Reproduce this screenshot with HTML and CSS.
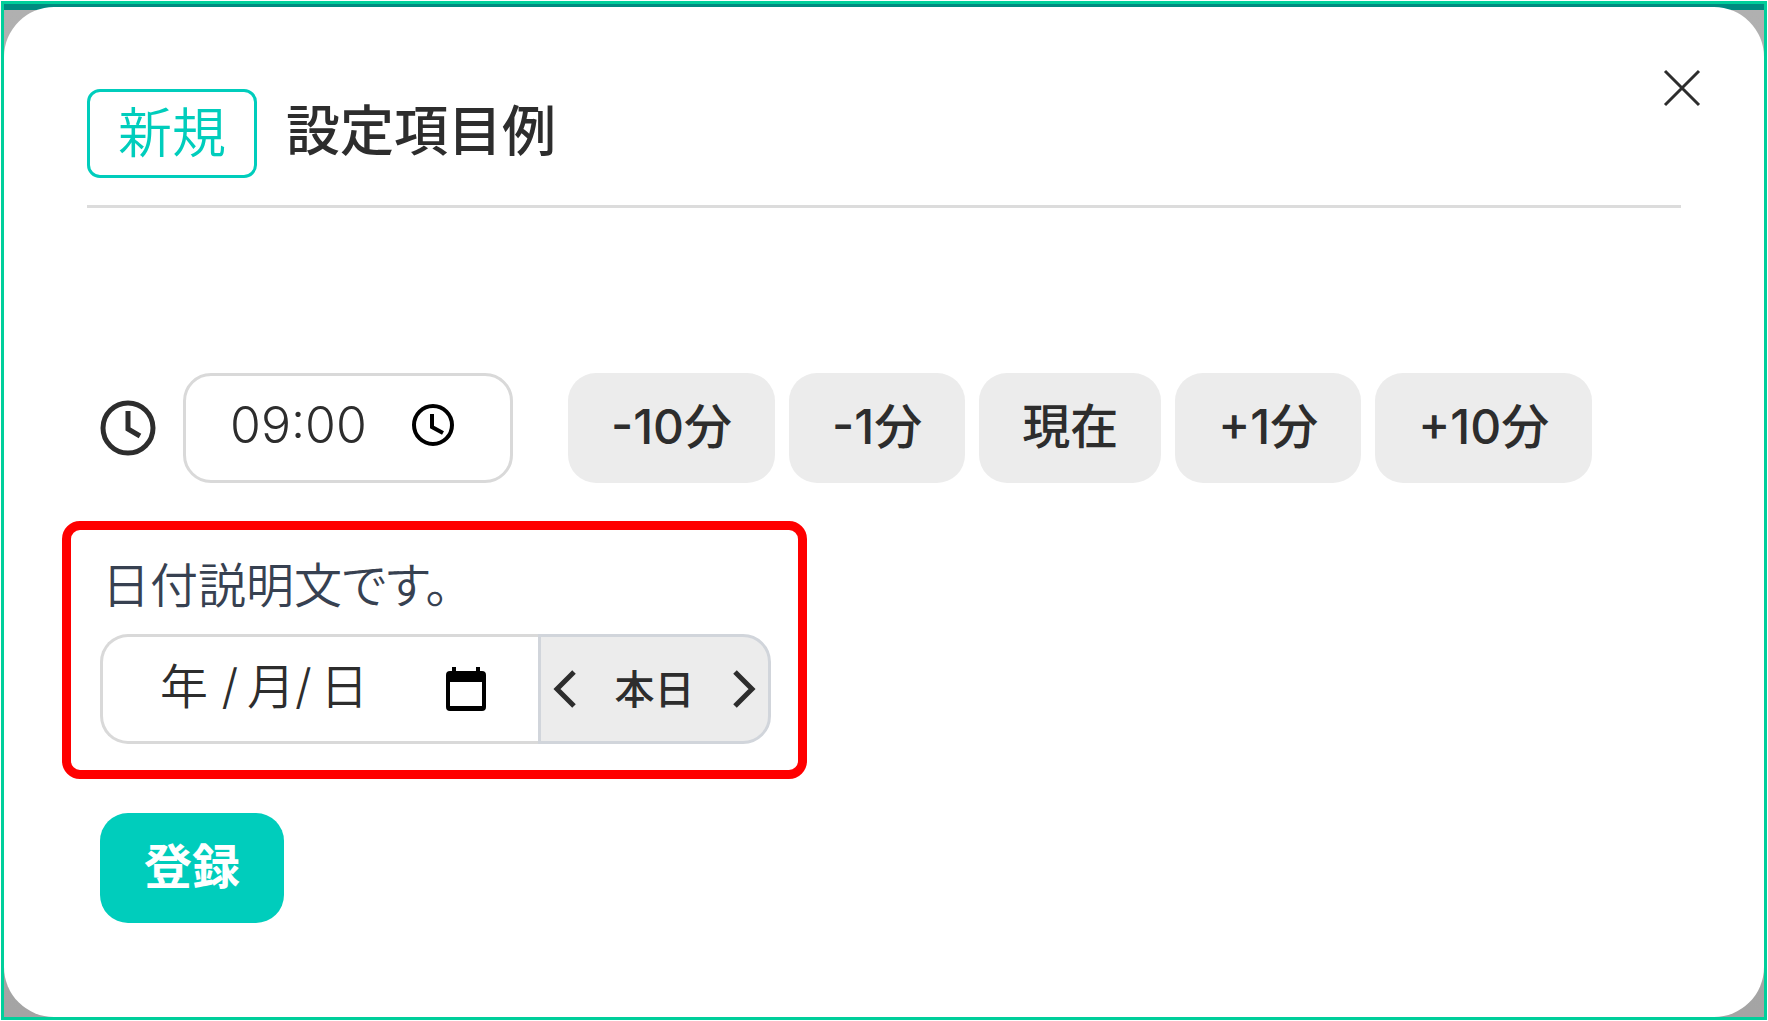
FILE: index.html
```
<!DOCTYPE html>
<html lang="ja">
<head>
    <meta charset="UTF-8">
    <meta name="viewport" content="width=device-width, initial-scale=1.0">
    <title>設定項目例</title>
    <link rel="stylesheet" href="styles.css">
</head>
<body>
    <div class="screen">
        <main class="modal">
            <button type="button" class="close" aria-label="閉じる">
                <svg viewBox="0 0 38 38"><path d="M2 2L36 36M36 2L2 36"/></svg>
            </button>
            <header>
                <span class="badge">新規</span>
                <h1>設定項目例</h1>
            </header>
            <form>
                <div class="time-row">
                    <label class="time-label" for="time" aria-label="時刻">
                        <svg viewBox="0 0 56 56"><circle cx="28" cy="28" r="25"/><path d="M28 11V29L40 36"/></svg>
                    </label>
                    <div class="field time-field">
                        <input id="time" type="text" value="09:00">
                        <svg class="clock" viewBox="0 0 44 44"><circle cx="22" cy="22" r="19"/><path d="M21 11V24L32 30"/></svg>
                    </div>
                    <div class="steps">
                        <button type="button">-10分</button>
                        <button type="button">-1分</button>
                        <button type="button">現在</button>
                        <button type="button">+1分</button>
                        <button type="button">+10分</button>
                    </div>
                </div>
                <div class="date-box">
                    <label for="date">日付説明文です。</label>
                    <div class="date-row">
                        <div class="field date-field">
                            <input id="date" type="text" value="年 /&thinsp;月/&thinsp;日">
                            <svg class="calendar" viewBox="0 0 40 44"><path d="M6 0h4v4h20V0h4v4h2q4 0 4 4v32q0 4-4 4H4q-4 0-4-4V8q0-4 4-4h2zM4 15v24h32V15z"/></svg>
                        </div>
                        <div class="date-nav">
                            <button type="button" aria-label="前日"><svg viewBox="0 0 24 38"><path d="M21 2L4 19L21 36"/></svg></button>
                            <button type="button" class="today">本日</button>
                            <button type="button" aria-label="翌日"><svg viewBox="0 0 24 38"><path d="M3 2L20 19L3 36"/></svg></button>
                        </div>
                    </div>
                </div>
                <button type="submit" class="submit">登録</button>
            </form>
        </main>
    </div>
</body>
</html>
```
FILE: styles.css
```
* {
    box-sizing: border-box;
    margin: 0;
    padding: 0;
}
body {
    display: flex;
    min-height: 100vh;
    padding: 1px;
    background: #fff;
    color: #2d2d2d;
    font-family: Inter, "Noto Sans CJK JP", sans-serif;
    font-size: 48px;
}
button, input {
    font: inherit;
    color: inherit;
    border: none;
}
button {
    cursor: pointer;
}
svg {
    display: block;
    flex: none;
    fill: none;
    stroke: #2d2d2d;
}
.screen {
    flex: 1;
    display: flex;
    padding-top: 3px;
    border: 3px solid #00cf9b;
    background: linear-gradient(#008b80 6px, #b0b0b0 6px, #a4a4a4);
}
.modal {
    flex: 1;
    position: relative;
    padding: 82px 83px 60px;
    border-radius: 50px;
    background: #fff;
}
.close {
    position: absolute;
    top: 62px;
    right: 63px;
    background: none;
}
.close svg {
    width: 38px;
    height: 38px;
    stroke-width: 3;
}
header {
    display: flex;
    align-items: center;
    gap: 29px;
    padding-bottom: 27px;
    border-bottom: 3px solid #dcdcdc;
    font-family: "Noto Sans CJK JP", sans-serif;
    font-size: 54px;
    line-height: 76px;
}
.badge {
    height: 89px;
    padding: 0 28px;
    border: 3px solid #00cdbc;
    border-radius: 13px;
    color: #00cdbc;
    font-weight: 350;
}
h1 {
    padding-bottom: 12px;
    font-size: inherit;
    font-weight: 500;
}
form {
    margin: 165px -83px 0 0;
    padding-left: 13px;
}
.time-row {
    display: flex;
    align-items: center;
}
.time-label svg {
    width: 56px;
    height: 56px;
    stroke-width: 5;
}
.field {
    display: flex;
    align-items: center;
    height: 110px;
    border: 3px solid #d9d9d9;
    background: #fff;
}
.field input {
    min-width: 0;
    height: 98px;
    padding-bottom: 6px;
    background: none;
    font-weight: 350;
    outline: none;
}
.time-field {
    width: 330px;
    margin: 0 55px 0 27px;
    padding-left: 44px;
    border-radius: 28px;
}
.time-field input {
    width: 181px;
    font-size: 50px;
}
.field svg {
    width: 44px;
    height: 44px;
    stroke: #000;
    stroke-width: 4;
}
.field .clock {
    margin-bottom: 6px;
}
.steps {
    display: flex;
    gap: 14px;
}
.steps button, .submit {
    height: 110px;
    padding: 0 43px 10px;
    border-radius: 28px;
    background: #ececec;
    font-weight: 500;
    white-space: nowrap;
}
.date-box {
    width: 745px;
    margin: 38px 0 34px -38px;
    padding: 16px 27px 26px 29px;
    border: 9px solid #f00;
    border-radius: 18px;
}
.date-box label {
    display: block;
    margin-bottom: 16px;
    padding-left: 2px;
    color: #374151;
    font-family: "Noto Sans CJK JP", sans-serif;
    font-feature-settings: "palt";
    font-weight: 350;
    line-height: 72px;
}
.date-row {
    display: flex;
}
.date-field {
    flex: 1;
    padding-left: 57px;
    border-right: none;
    border-radius: 28px 0 0 28px;
}
.date-field input {
    width: 286px;
    padding-bottom: 12px;
}
.field .calendar {
    width: 40px;
    fill: #000;
    stroke: none;
}
.date-nav {
    display: flex;
    align-items: center;
    justify-content: space-between;
    width: 233px;
    padding: 0 12px;
    border: 3px solid #d1d5db;
    border-radius: 0 28px 28px 0;
    background: #ececec;
}
.date-nav button {
    background: none;
}
.date-nav svg {
    width: 24px;
    height: 38px;
    stroke-width: 5;
}
.date-nav .today {
    padding-bottom: 4px;
    font-size: 40px;
    font-weight: 500;
}
.submit {
    display: block;
    padding: 0 44px 10px;
    background: #00cdbc;
    color: #fff;
    font-weight: 700;
}
```
